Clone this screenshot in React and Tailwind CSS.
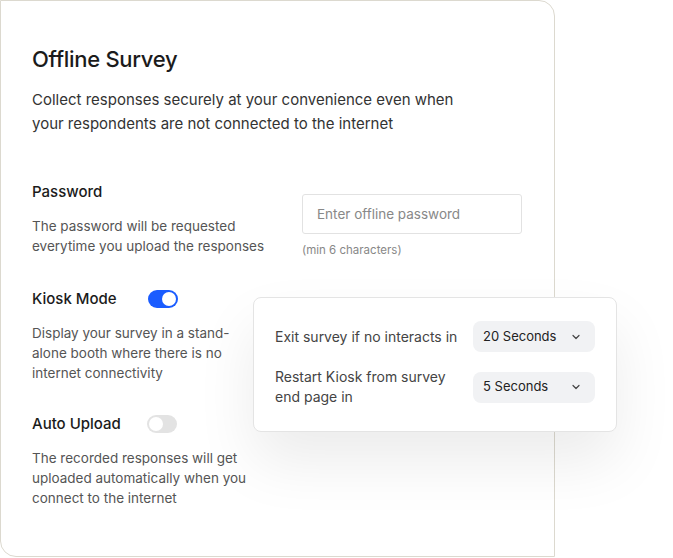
import React from 'react';

function Toggle({ on }) {
  return on ? (
    <div className="w-[30px] h-[18px] rounded-full bg-[#1a5cff] flex items-center justify-end pr-[2px]">
      <div className="w-[14px] h-[14px] rounded-full bg-white"></div>
    </div>
  ) : (
    <div className="w-[30px] h-[18px] rounded-full bg-[#e3e3e3] flex items-center pl-[2px]">
      <div className="w-[14px] h-[14px] rounded-full bg-white"></div>
    </div>
  );
}

function Select({ value }) {
  return (
    <div className="w-[122px] h-[31px] rounded-lg bg-[#f1f2f4] flex items-center justify-between pl-[10px] pr-[14px] text-[13px] text-[#222]">
      <span>{value}</span>
      <svg className="w-[10px] h-[10px] text-[#444]" viewBox="0 0 10 10" fill="none" stroke="currentColor" strokeWidth={1.2}>
        <path d="M2 3.5l3 3 3-3" strokeLinecap="round" strokeLinejoin="round" />
      </svg>
    </div>
  );
}

export default function App() {
  return (
    <div className="relative w-[673px] h-[558px] bg-white font-['Inter',sans-serif]">
      <div className="w-[555px] h-[557px] border border-[#dcd9cf] rounded-tr-2xl rounded-bl-2xl pl-[31px] pt-[44px]">
        <h1 className="text-[22px] leading-[28px] font-medium text-[#1b1b1b] tracking-[-0.3px]">Offline Survey</h1>
        <p className="mt-[15px] text-[15px] leading-[24px] text-[#333] w-[445px]">
          Collect responses securely at your convenience even when your respondents are not connected to the internet
        </p>

        <div className="mt-[46px] flex">
          <div className="w-[270px]">
            <h2 className="text-[15px] leading-[20px] font-medium text-[#1b1b1b]">Password</h2>
            <p className="mt-[14px] text-[13.5px] leading-[20px] text-[#555]">
              The password will be requested everytime you upload the responses
            </p>
          </div>
          <div className="pt-[12px]">
            <div className="w-[220px] h-[40px] border border-[#e2e2e2] rounded-[3px] flex items-center px-[14px] text-[13.5px] text-[#888]">
              Enter offline password
            </div>
            <p className="mt-[8px] text-[11.5px] text-[#888]">(min 6 characters)</p>
          </div>
        </div>

        <div className="mt-[30px] flex items-center gap-[31px]">
          <h2 className="text-[15px] leading-[20px] font-medium text-[#1b1b1b]">Kiosk Mode</h2>
          <Toggle on />
        </div>
        <p className="mt-[14px] w-[220px] text-[13.5px] leading-[20px] text-[#555]">
          Display your survey in a stand-alone booth where there is no internet connectivity
        </p>

        <div className="mt-[31px] flex items-center gap-[26px]">
          <h2 className="text-[15px] leading-[20px] font-medium text-[#1b1b1b]">Auto Upload</h2>
          <Toggle />
        </div>
        <p className="mt-[14px] w-[225px] text-[13.5px] leading-[20px] text-[#555]">
          The recorded responses will get uploaded automatically when you connect to the internet
        </p>
      </div>

      <div className="absolute left-[253px] top-[297px] w-[364px] h-[135px] bg-white border border-[#e4e4e4] rounded-lg shadow-[0_30px_60px_rgba(0,0,0,0.08)] pl-[21px] pr-[21px] pt-[23px]">
        <div className="flex items-center justify-between">
          <span className="text-[14px] leading-[20px] text-[#444]">Exit survey if no interacts in</span>
          <Select value="20 Seconds" />
        </div>
        <div className="mt-[15px] flex items-center justify-between">
          <span className="w-[180px] text-[14px] leading-[20px] text-[#444]">Restart Kiosk from survey end page in</span>
          <Select value="5 Seconds" />
        </div>
      </div>
    </div>
  );
}
